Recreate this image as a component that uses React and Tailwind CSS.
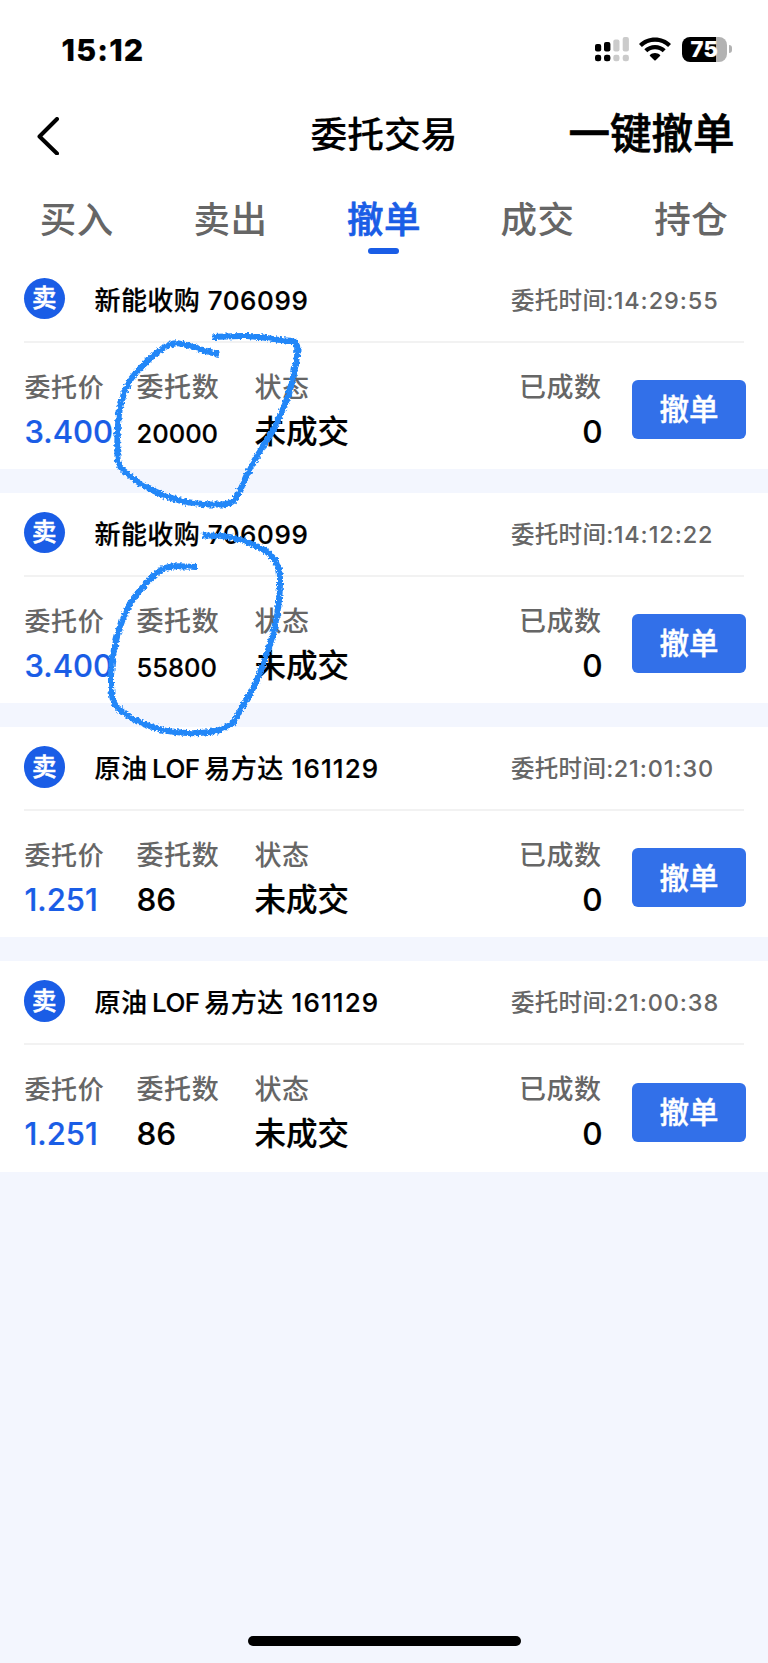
import React, { useState } from 'react';

const TABS = ['买入', '卖出', '撤单', '成交', '持仓'];

const ORDERS = [
  { id: 1, name: ['新能收购'], code: '706099', time: '14:29:55', price: '3.400', amount: '20000', status: '未成交', filled: 0 },
  { id: 2, name: ['新能收购'], code: '706099', time: '14:12:22', price: '3.400', amount: '55800', status: '未成交', filled: 0 },
  { id: 3, name: ['原油', 'LOF', '易方达'], code: '161129', time: '21:01:30', price: '1.251', amount: '86', status: '未成交', filled: 0 },
  { id: 4, name: ['原油', 'LOF', '易方达'], code: '161129', time: '21:00:38', price: '1.251', amount: '86', status: '未成交', filled: 0 },
];

// Pen strokes drawn over the first two orders
const STROKES = [
  [
    [219, 354], [206, 351], [190, 346], [176.5, 343.3], [165, 347], [147, 361.5], [129, 382], [120, 408],
    [117.5, 436], [118.5, 463], [129, 475], [147, 487.5], [176, 499.5], [203, 504], [228, 503.5], [238, 494], [253, 463],
    [273, 430], [288, 396], [296.5, 360], [295.5, 343], [280, 340], [247, 336], [212.5, 337],
  ],
  [
    [197, 567], [172, 566.5], [157, 573], [134, 598], [122, 621.5], [114, 650], [111, 677], [113, 700],
    [122, 711.5], [143, 723.5], [171, 731.5], [206, 732.5], [230, 725], [241, 709], [257, 680], [273, 634],
    [279, 600], [279, 569], [266.5, 551.5], [241, 540], [222, 536], [202.5, 535.5],
  ],
];

function smoothPath(points) {
  let d = `M${points[0][0]} ${points[0][1]}`;
  for (let i = 0; i < points.length - 1; i++) {
    const p0 = points[i - 1] || points[i];
    const p1 = points[i];
    const p2 = points[i + 1];
    const p3 = points[i + 2] || p2;
    d += ` C${p1[0] + (p2[0] - p0[0]) / 6} ${p1[1] + (p2[1] - p0[1]) / 6}`;
    d += ` ${p2[0] - (p3[0] - p1[0]) / 6} ${p2[1] - (p3[1] - p1[1]) / 6} ${p2[0]} ${p2[1]}`;
  }
  return d;
}

function SignalIcon() {
  return (
    <svg className="h-[26px] w-[35px]" viewBox="0 0 35 26">
      <rect x="0" y="8" width="6.2" height="7.5" rx="2" />
      <rect x="9" y="6" width="6.4" height="9.5" rx="2" />
      <rect x="18.3" y="3.5" width="6.2" height="12" rx="2" fill="#cbcbcb" />
      <rect x="27.7" y="1" width="6.2" height="14.5" rx="2" fill="#cbcbcb" />
      <rect x="0" y="18.7" width="6.2" height="6.6" rx="2.4" />
      <rect x="9" y="18.7" width="6.4" height="6.6" rx="2.4" />
      <rect x="18.3" y="18.7" width="6.2" height="6.6" rx="2.4" fill="#cbcbcb" />
      <rect x="27.7" y="18.7" width="6.2" height="6.6" rx="2.4" fill="#cbcbcb" />
    </svg>
  );
}

function WifiIcon() {
  return (
    <svg className="h-[24px] w-[32px]" viewBox="0 0 32 24">
      <path d="M0 6.9C4.2 2.9 9.9.6 16 .6s11.8 2.3 16 6.3l-2.9 3C25.600 6.600 21 4.800 16 4.800S6.400 6.600 2.900 9.900z" />
      <path d="M5.300 12.300C8.100 9.700 11.900 8.100 16 8.100s7.900 1.600 10.700 4.200l-3 3c-2-1.900-4.700-3-7.700-3s-5.700 1.100-7.700 3z" />
      <path d="M11 17.900c1.300-1.200 3.100-1.900 5-1.900s3.700.7 5 1.900c.4.400.4.700 0 1.100l-4.300 4.200c-.5.500-.9.500-1.400 0L11 19c-.4-.4-.4-.7 0-1.100z" />
    </svg>
  );
}

function Battery() {
  return (
    <div className="flex items-center gap-[1.500px]">
      <div className="flex h-[25px] w-[45.500px] items-center justify-center rounded-[8px] bg-[linear-gradient(90deg,#000_74.500%,#b2b2b2_74.500%)]">
        <span className="text-[22px] leading-none font-extrabold tracking-[0.300px] text-white">75</span>
      </div>
      <div className="h-[8px] w-[3px] rounded-r-full bg-[#b2b2b2]" />
    </div>
  );
}

function StatusBar() {
  return (
    <div className="flex h-[98px] justify-between pt-[36px] pr-[36.500px] pl-[61.500px]">
      <span className="h-[26px] text-[30.500px] leading-[27px] font-extrabold tracking-[1.200px]">15:12</span>
      <div className="flex h-[26px] items-center">
        <SignalIcon />
        <div className="ml-[9.500px] flex">
          <WifiIcon />
        </div>
        <div className="ml-[10.500px]">
          <Battery />
        </div>
      </div>
    </div>
  );
}

function Field({ label, small = false, className = '', labelClass = '', children }) {
  return (
    <div className={`flex flex-col ${className}`}>
      <span
        className={`leading-[32px] text-[#666] [-webkit-text-stroke:0px] ${small ? 'text-[26px] tracking-[0.600px]' : 'text-[27px] tracking-[0.600px]'} ${labelClass}`}
      >
        {label}
      </span>
      <div className="mt-[10px] flex h-[36px] items-center">{children}</div>
    </div>
  );
}

function OrderCard({ order }) {
  const long = order.amount.length > 4;
  const fund = order.name.length > 1;

  return (
    <article className="h-[210.500px] bg-white">
      <div className="mx-6 flex h-[84.100px] items-center border-b-2 border-[#f2f2f2]">
        <div className="-mt-[2px] -ml-[0.500px] flex size-[41.500px] shrink-0 items-center justify-center rounded-full bg-[#1a5de6] text-[24.500px] leading-none text-white [-webkit-text-stroke:0.500px]">
          卖
        </div>
        <h2 className="mt-[2px] ml-[29.500px] flex text-[26px] leading-8 tracking-[0.400px] whitespace-pre">
          <span className="flex gap-[4.800px]">
            {order.name.map((part) => (
              <span key={part} className={part === 'LOF' ? 'tracking-[-0.600px]' : ''}>{part}</span>
            ))}
          </span>
          <span className={fund ? 'tracking-[1.100px]' : 'tracking-[0.600px]'}> {order.code}</span>
        </h2>
        <span className="mt-[2px] ml-auto w-[233px] text-[23.500px] leading-8 tracking-[0.300px] whitespace-nowrap text-[#666] [-webkit-text-stroke:0px]">
          委托时间:<span className="tracking-[0.900px]">{order.time}</span>
        </span>
      </div>

      <div className="flex pt-[29px] pl-[24.500px]">
        <Field label="委托价" small className="w-[112px]">
          <span className="text-[31px] leading-9 text-[#1a5de6]">{order.price}</span>
        </Field>
        <Field label="委托数" className="w-[118px]">
          <span className={long ? 'pt-1 text-[25.500px] leading-8' : 'text-[31.500px] leading-9'}>{order.amount}</span>
        </Field>
        <Field label="状态" className="w-[200px]">
          <span className="text-[31.500px] leading-9">{order.status}</span>
        </Field>
        <Field label="已成数" className="ml-auto items-end" labelClass="mr-[0.300px]">
          <span className="-mr-[0.500px] text-[31.500px] leading-9">{order.filled}</span>
        </Field>
        <button
          type="button"
          className="mt-[8.400px] mr-[22px] ml-[30px] h-[59px] w-[114px] rounded-[6px] bg-[#3270e9] pt-[1px] text-[29.500px] leading-none text-white [-webkit-text-stroke:0.400px]"
        >
          撤单
        </button>
      </div>
    </article>
  );
}

function PenMarks() {
  return (
    <svg className="pointer-events-none absolute top-0 left-0 h-[800px] w-[400px]" viewBox="0 0 400 800" fill="none">
      <filter id="crayon" x="0" y="0" width="400" height="800" filterUnits="userSpaceOnUse">
        <feTurbulence type="fractalNoise" baseFrequency="0.4" numOctaves="2" seed="4" result="noise" />
        <feDisplacementMap in="SourceGraphic" in2="noise" scale="5" xChannelSelector="R" yChannelSelector="G" />
      </filter>
      <g filter="url(#crayon)" stroke="#2487f8" strokeWidth="6" strokeLinejoin="round">
        {STROKES.map((points, i) => (
          <path key={i} d={smoothPath(points)} />
        ))}
      </g>
    </svg>
  );
}

export default function App() {
  const [activeTab, setActiveTab] = useState('撤单');

  return (
    <div className="relative flex h-[1663px] w-[768px] flex-col overflow-hidden bg-[#f3f6fe] font-['Inter','Noto_Sans_CJK_SC',sans-serif] font-medium text-black [-webkit-text-stroke:0.200px]">
      <header className="bg-white">
        <StatusBar />

        <div className="grid h-[76px] grid-cols-[1fr_auto_1fr] items-center pr-[33.500px] pl-[33.500px]">
          <button type="button" className="ml-[3.500px] flex">
            <svg className="h-[38px] w-[22px]" viewBox="0 0 22 38" fill="none" stroke="#000" strokeWidth="4" strokeLinecap="round" strokeLinejoin="round">
              <path d="M20 2 2.500 19.500 20 36.500" />
            </svg>
          </button>
          <h1 className="pb-[2px] text-[36.700px] leading-10">委托交易</h1>
          <button type="button" className="justify-self-end pb-[5px] text-[41.500px] leading-10 [-webkit-text-stroke:0.700px]">一键撤单</button>
        </div>

        <nav className="flex h-[84.500px]">
          {TABS.map((tab) => (
            <button
              key={tab}
              type="button"
              onClick={() => setActiveTab(tab)}
              className={`flex flex-1 flex-col items-center pt-[26px] text-[36.500px] leading-10 tracking-[0.500px] ${
                activeTab === tab ? 'text-[#1a5de6] [-webkit-text-stroke:0.700px]' : 'text-[#666] [-webkit-text-stroke:0px]'
              }`}
            >
              {tab}
              {activeTab === tab && <span className="mt-[8px] h-[6px] w-[31px] rounded-full bg-[#1a5de6]" />}
            </button>
          ))}
        </nav>
      </header>

      <main className="flex flex-col gap-[23.700px]">
        {ORDERS.map((order) => (
          <OrderCard key={order.id} order={order} />
        ))}
      </main>

      <PenMarks />

      <div className="mx-auto mt-auto mb-[17.500px] h-[9.500px] w-[273px] rounded-full bg-black" />
    </div>
  );
}
